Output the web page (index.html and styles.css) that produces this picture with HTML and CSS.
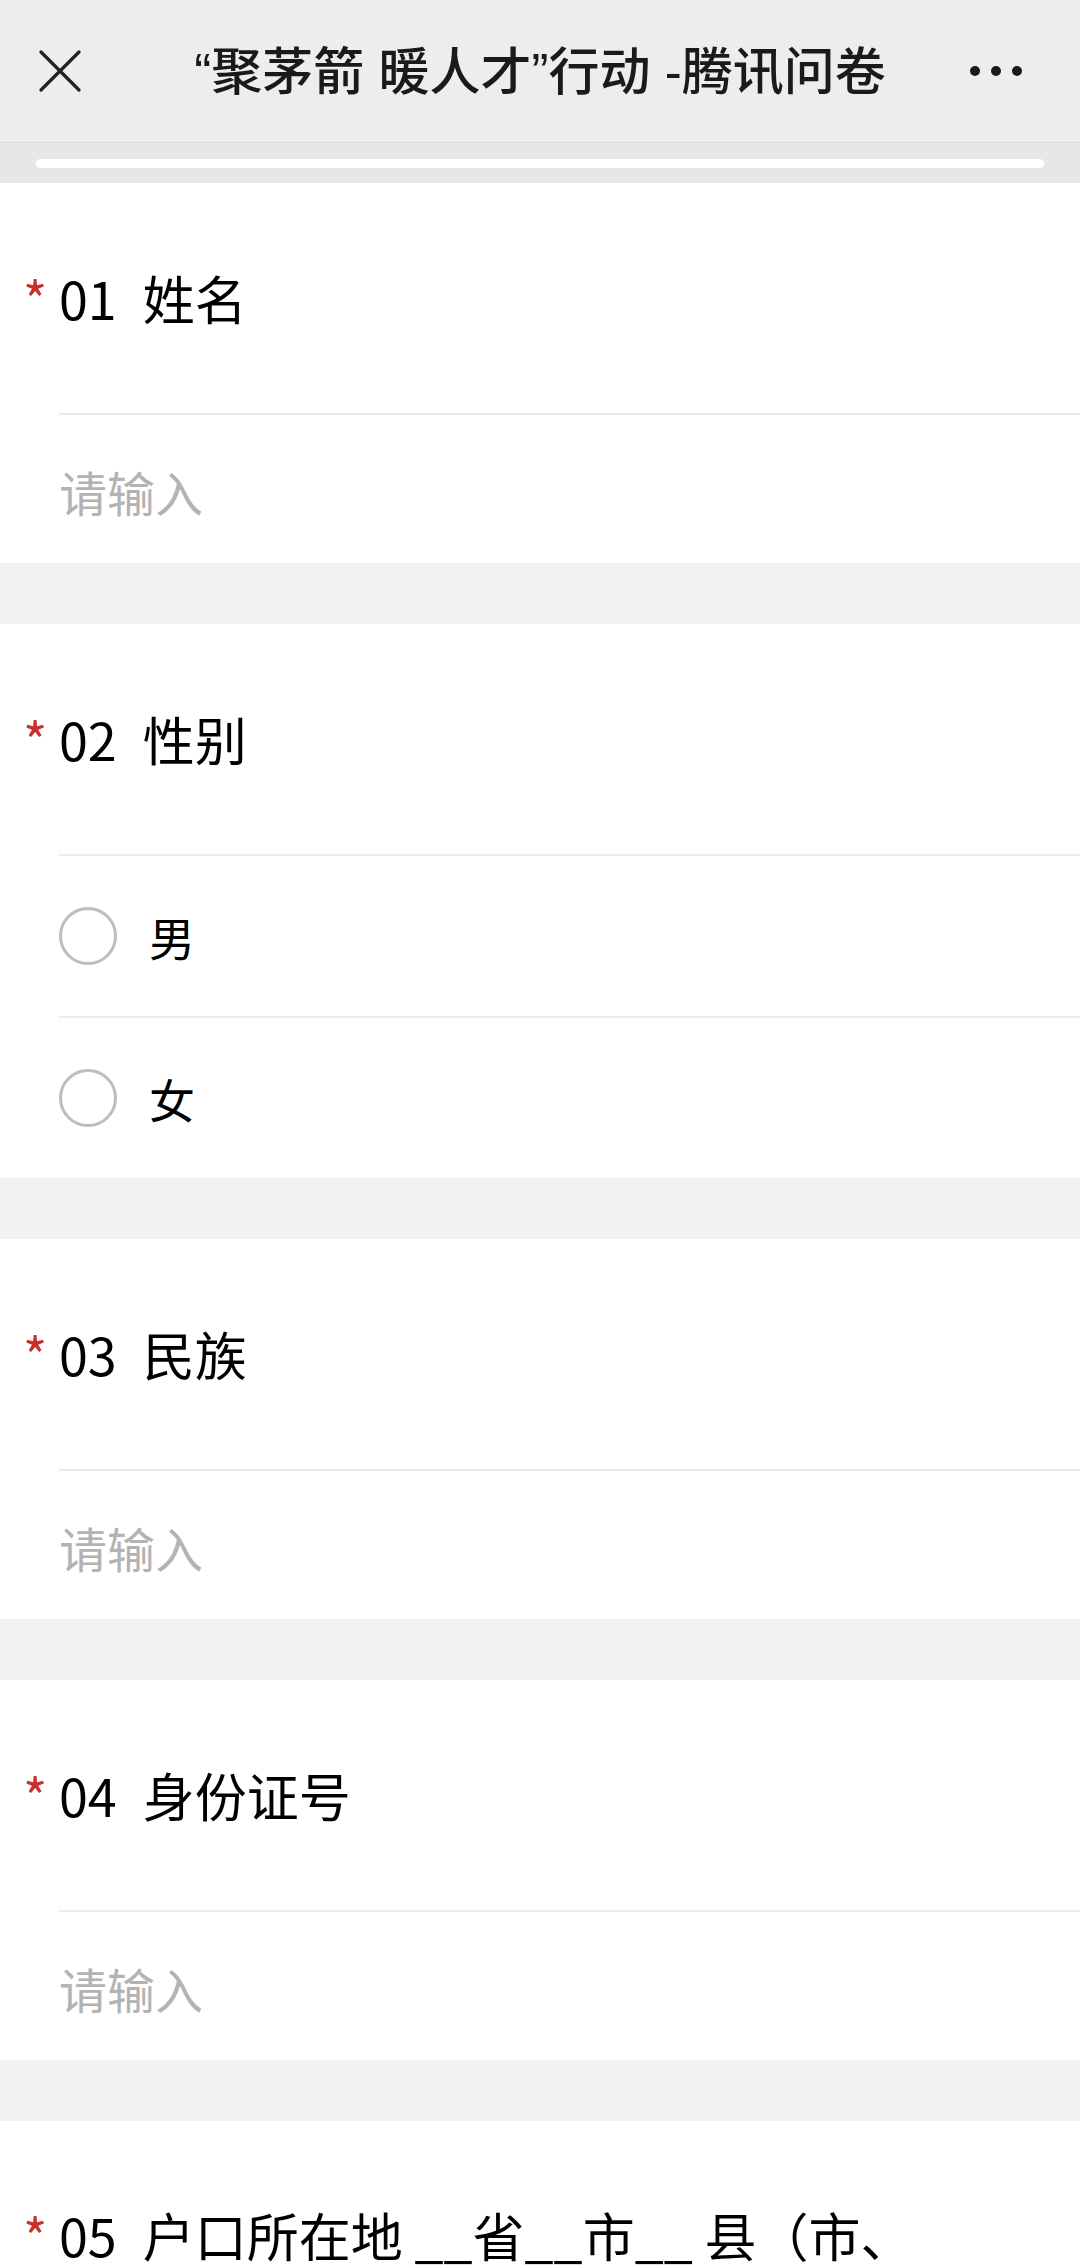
FILE: index.html
```html
<!DOCTYPE html>
<html lang="zh-CN">
<head>
<meta charset="utf-8">
<title>腾讯问卷</title>
<link rel="stylesheet" href="styles.css">
</head>
<body>
<header class="navbar">
  <div class="nav-left">
    <svg class="icon-close" width="42" height="42" viewBox="0 0 42 42"><path d="M2 2 L40 40 M40 2 L2 40" stroke="#222" stroke-width="3.2" stroke-linecap="round" fill="none"/></svg>
  </div>
  <div class="nav-title">“聚茅箭 暖人才”行动 -腾讯问卷</div>
  <div class="nav-right">
    <svg width="52" height="12" viewBox="0 0 52 12"><circle cx="5" cy="6" r="5" fill="#1a1a1a"/><circle cx="26" cy="6" r="5" fill="#1a1a1a"/><circle cx="47" cy="6" r="5" fill="#1a1a1a"/></svg>
  </div>
</header>
<div class="progress"><div class="progress-bar"></div></div>

<main class="survey">
  <section class="card">
    <div class="q-title"><span class="req">*</span><span class="qnum">01</span><span>姓名</span></div>
    <div class="q-input">请输入</div>
  </section>

  <section class="card">
    <div class="q-title"><span class="req">*</span><span class="qnum">02</span><span>性别</span></div>
    <div class="q-option"><span class="radio"></span><span class="opt-text">男</span></div>
    <div class="q-option"><span class="radio"></span><span class="opt-text">女</span></div>
  </section>

  <section class="card">
    <div class="q-title"><span class="req">*</span><span class="qnum">03</span><span>民族</span></div>
    <div class="q-input">请输入</div>
  </section>

  <section class="card">
    <div class="q-title"><span class="req">*</span><span class="qnum">04</span><span>身份证号</span></div>
    <div class="q-input">请输入</div>
  </section>

  <section class="card">
    <div class="q-title q-title-long"><span class="req">*</span><span class="qnum">05</span><span>户口所在地 __省__市__ 县（市、</span></div>
  </section>
</main>
</body>
</html>
```

FILE: styles.css
```css
html, body {
  margin: 0;
  padding: 0;
}
body {
  width: 1080px;
  background: #f2f2f2;
  font-family: "Noto Sans CJK SC", "Noto Sans", sans-serif;
  color: #000;
  overflow: hidden;
}
.navbar {
  height: 142px;
  background: #ededed;
  border-bottom: 1px solid #dcdcdc;
  display: grid;
  grid-template-columns: 120px 1fr 120px;
  align-items: center;
}
.nav-left {
  padding-left: 39px;
  display: flex;
  align-items: center;
}
.nav-title {
  text-align: center;
  font-family: "Liberation Sans", "Noto Sans CJK SC", sans-serif;
  font-size: 51px;
  font-weight: 500;
  color: #1a1a1a;
  white-space: nowrap;
  line-height: 1;
  padding-top: 2px;
}
.nav-right {
  display: flex;
  justify-content: flex-end;
  padding-right: 58px;
  align-items: center;
}
.progress {
  height: 40px;
  background: #e7e7e7;
  padding: 16px 36px 0 36px;
  box-sizing: border-box;
}
.progress-bar {
  height: 9px;
  background: #fff;
  border-radius: 5px;
}
.survey {
  display: flex;
  flex-direction: column;
  gap: 61px;
}
.card {
  background: #fff;
  padding-left: 59px;
}
.q-title {
  height: 230px;
  display: flex;
  align-items: center;
  margin-left: -38px;
  font-size: 52px;
  line-height: 1.3;
  color: #000;
}
.q-title-long {
  align-items: flex-start;
  box-sizing: border-box;
  padding-top: 80px;
}
.req {
  width: 38px;
  flex: none;
  color: #c9302c;
  padding-left: 2px;
  box-sizing: border-box;
}
.qnum {
  flex: none;
  margin-right: 26px;
}
.q-input {
  height: 150px;
  box-sizing: border-box;
  border-top: 2px solid #ebebeb;
  display: flex;
  align-items: center;
  padding-top: 4px;
  font-size: 48px;
  color: #b3b3b3;
}
.q-option {
  height: 162px;
  box-sizing: border-box;
  border-top: 2px solid #ebebeb;
  display: flex;
  align-items: center;
  gap: 32px;
}
.radio {
  width: 58px;
  height: 58px;
  box-sizing: border-box;
  border: 3px solid #bdbdbd;
  border-radius: 50%;
  flex: none;
}
.opt-text {
  font-size: 46px;
  color: #000;
}
```
